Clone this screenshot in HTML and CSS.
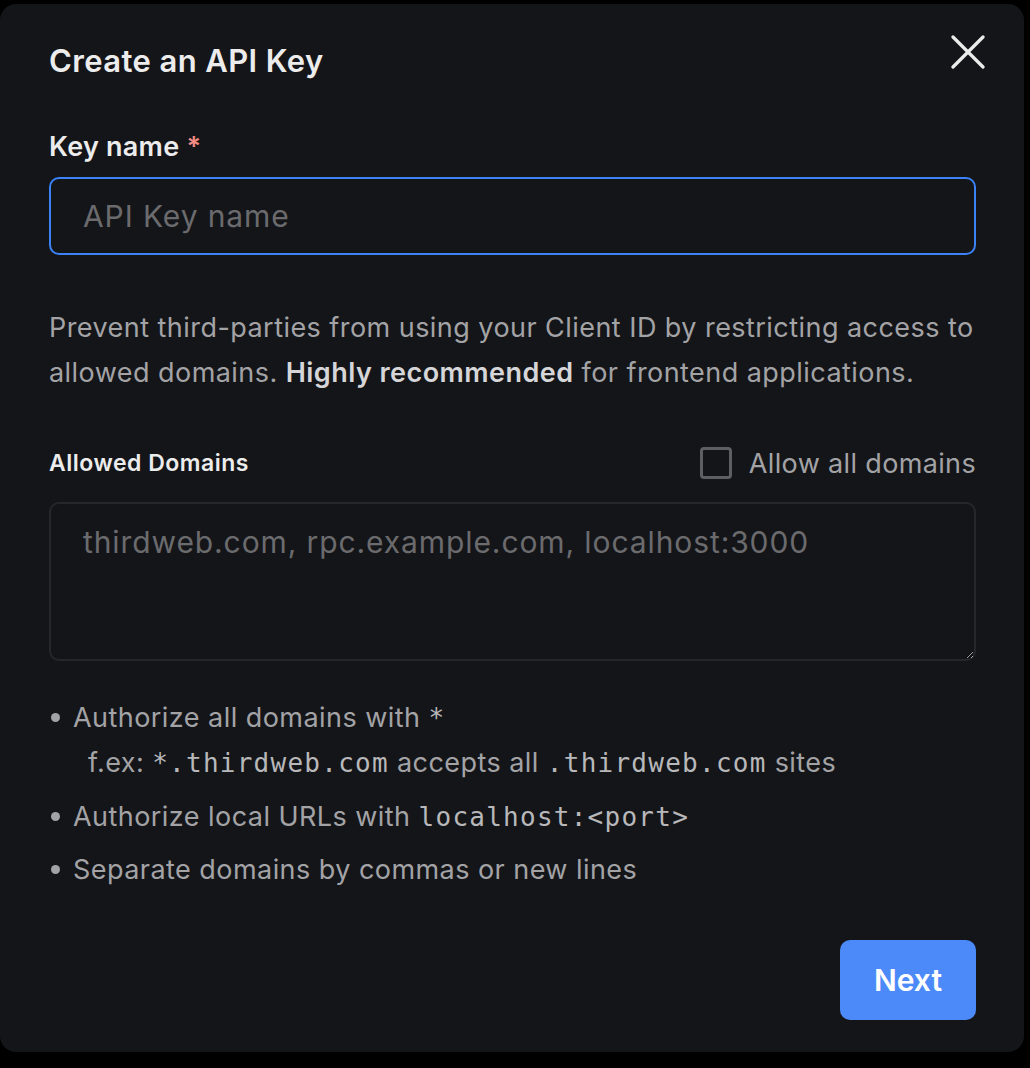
FILE: index.html
```html
<!DOCTYPE html>
<html lang="en">
<head>
<meta charset="utf-8">
<title>Create an API Key</title>
<link rel="stylesheet" href="styles.css">
</head>
<body>
<div class="modal">
  <div class="header">
    <h1 class="title">Create an API Key</h1>
    <button class="close" aria-label="Close">
      <svg width="34" height="34" viewBox="0 0 34 34"><path d="M2 2 L32 32 M32 2 L2 32" stroke="#ececec" stroke-width="3.2" stroke-linecap="round"/></svg>
    </button>
  </div>
  <label class="label">Key name <span class="req">*</span></label>
  <input class="input" type="text" placeholder="API Key name">
  <p class="desc">Prevent third-parties from using your Client ID by restricting access to allowed domains. <strong>Highly recommended</strong> for frontend applications.</p>
  <div class="domains-head">
    <span class="label-sm">Allowed Domains</span>
    <label class="check"><span class="box"></span>Allow all domains</label>
  </div>
  <textarea class="textarea" placeholder="thirdweb.com, rpc.example.com, localhost:3000"></textarea>
  <ul class="hints">
    <li>Authorize all domains with <code>*</code>
      <div class="sub">f.ex: <code>*.thirdweb.com</code> accepts all <code>.thirdweb.com</code> sites</div>
    </li>
    <li>Authorize local URLs with <code>localhost:&lt;port&gt;</code></li>
    <li>Separate domains by commas or new lines</li>
  </ul>
  <div class="footer">
    <button class="next">Next</button>
  </div>
</div>
</body>
</html>
```

FILE: styles.css
```css
* { box-sizing: border-box; }
html, body { margin: 0; padding: 0; background: #000; }
body {
  font-family: Inter, "Noto Sans", sans-serif;
  color: #ececec;
  padding-top: 4px;
}
.modal {
  width: 1024px;
  height: 1048px;
  background: #141519;
  border-radius: 16px;
  padding: 30px 48px 0 49px;
  display: flex;
  flex-direction: column;
}
.header {
  display: flex;
  justify-content: space-between;
  align-items: center;
  height: 52px;
}
.title {
  margin: 0;
  font-size: 31px;
  font-weight: 600;
  letter-spacing: 0.4px;
  color: #ececec;
}
.close {
  background: none;
  border: 0;
  padding: 0;
  margin-right: -9px;
  margin-top: -16px;
  width: 34px;
  height: 34px;
}
.label {
  margin-top: 43px;
  font-size: 27px;
  font-weight: 600;
  letter-spacing: 0.25px;
  line-height: 36px;
  color: #ececec;
}
.req { color: #f28b82; }
.input {
  margin-top: 12px;
  height: 78px;
  width: 100%;
  background: transparent;
  border: 2px solid #3b82f6;
  border-radius: 10px;
  padding: 0 32px;
  font-family: inherit;
  font-size: 30px;
  letter-spacing: 0.9px;
  color: #ececec;
  outline: none;
}
.input::placeholder { color: #6b6b6e; }
.desc {
  margin: 50px 0 0;
  font-size: 27px;
  letter-spacing: 0.45px;
  line-height: 45px;
  color: #a3a3a6;
}
.desc strong { color: #d6d6d8; font-weight: 600; }
.domains-head {
  margin-top: 48px;
  display: flex;
  justify-content: space-between;
  align-items: center;
  height: 40px;
}
.label-sm {
  font-size: 23px;
  font-weight: 600;
  letter-spacing: 0.5px;
  color: #ececec;
}
.check {
  display: flex;
  align-items: center;
  gap: 17px;
  font-size: 27px;
  letter-spacing: 0.35px;
  color: #a3a3a6;
}
.box {
  width: 32px;
  height: 32px;
  border: 3px solid #5f5f62;
  border-radius: 4px;
}
.textarea {
  margin-top: 19px;
  height: 159px;
  width: 100%;
  background: transparent;
  border: 2px solid #25272c;
  border-radius: 10px;
  padding: 20px 32px;
  font-family: inherit;
  font-size: 30px;
  letter-spacing: 0.9px;
  line-height: 36px;
  color: #ececec;
  resize: vertical;
  outline: none;
}
.textarea::placeholder { color: #6b6b6e; }
.hints {
  margin: 39px 0 0;
  padding: 0 0 0 24px;
  list-style: none;
  font-size: 27px;
  letter-spacing: 0.45px;
  line-height: 36px;
  color: #a3a3a6;
}
.hints li { margin-bottom: 17.5px; position: relative; }
.hints li::before {
  content: "";
  position: absolute;
  left: -22px;
  top: 13px;
  width: 9px;
  height: 9px;
  border-radius: 50%;
  background: #a3a3a6;
}
.hints code {
  font-family: "DejaVu Sans Mono", "Liberation Mono", monospace;
  font-size: 26px;
  letter-spacing: 1.25px;
  color: #b8b8bb;
}
.sub { margin-top: 9px; padding-left: 15px; }
.footer {
  margin-top: auto;
  margin-bottom: 32px;
  display: flex;
  justify-content: flex-end;
}
.next {
  width: 136px;
  height: 80px;
  border: 0;
  border-radius: 10px;
  background: #4b8af8;
  color: #fff;
  font-family: inherit;
  font-size: 30px;
  font-weight: 600;
}
```
